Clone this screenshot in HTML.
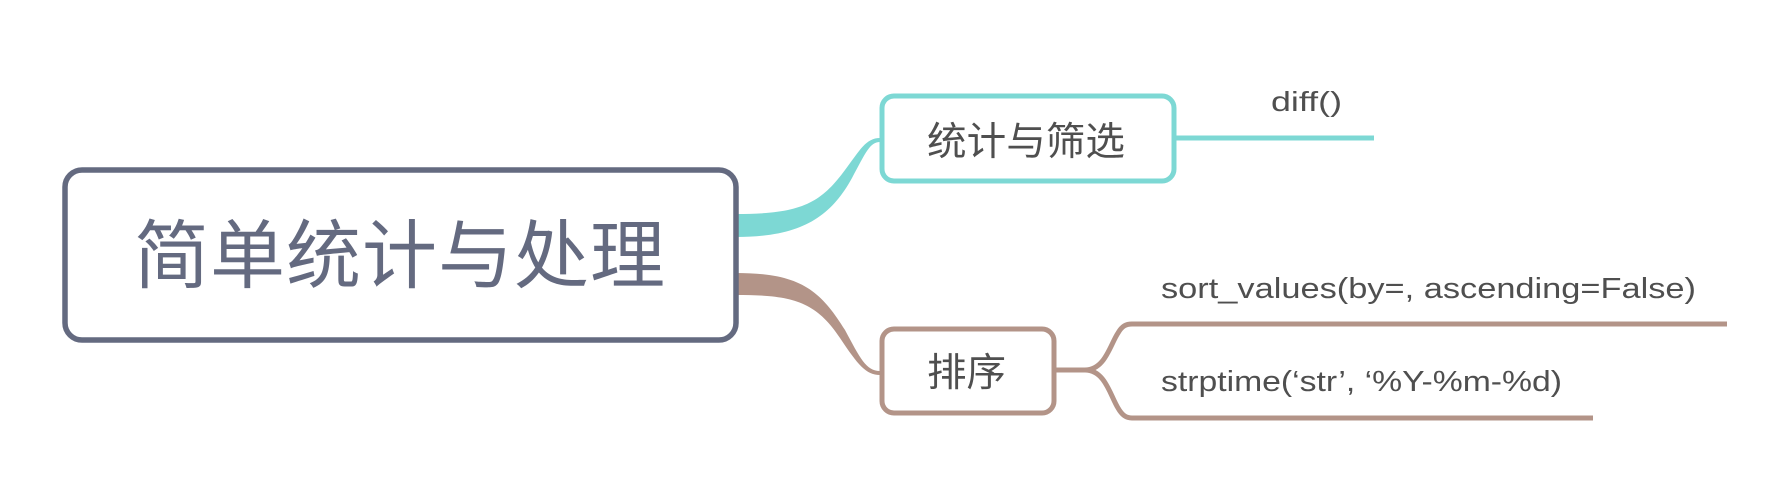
<!DOCTYPE html>
<html><head><meta charset="utf-8"><style>
html,body{margin:0;padding:0;background:#fff;}
svg{display:block;}
text{font-family:"Liberation Sans","Noto Sans CJK SC",sans-serif;fill:#4f4f4f;}
</style></head><body>
<svg width="1787" height="481" viewBox="0 0 1787 481" xmlns="http://www.w3.org/2000/svg">
<path d="M736,214 C800,214 820,204 845,170 C860,150 866,138 880,138 L880,142 C870,142 866,152 852,178 C830,218 800,237 736,237 Z" fill="#7dd8d4"/>
<path d="M736,273 C800,273 820,290 845,330 C860,358 866,371 880,371 L880,375 C866,375 858,365 840,338 C815,300 790,295 736,295 Z" fill="#b39488"/>
<rect x="65" y="170" width="671" height="170" rx="17" fill="#fff" stroke="#646a80" stroke-width="5.5"/>
<text x="400" y="282" font-size="75" text-anchor="middle" style="fill:#646a80" letter-spacing="1">简单统计与处理</text>
<rect x="882" y="96" width="292" height="85" rx="12" fill="#fff" stroke="#7dd8d4" stroke-width="5"/>
<text x="927" y="155" font-size="39" textLength="198" lengthAdjust="spacingAndGlyphs">统计与筛选</text>
<line x1="1176" y1="138" x2="1374" y2="138" stroke="#7dd8d4" stroke-width="5"/>
<text x="1271" y="111" font-size="28" textLength="71" lengthAdjust="spacingAndGlyphs">diff()</text>
<rect x="882" y="329" width="172" height="84" rx="12" fill="#fff" stroke="#b39488" stroke-width="5"/>
<text x="927" y="386" font-size="39" textLength="79" lengthAdjust="spacingAndGlyphs">排序</text>
<path d="M1056,370 L1085,370 C1105,370 1110,345 1118,333 C1122,326 1126,324 1132,324 L1727,324" fill="none" stroke="#b39488" stroke-width="5"/>
<path d="M1085,370 C1105,370 1110,395 1118,408 C1122,415 1126,418 1132,418 L1593,418" fill="none" stroke="#b39488" stroke-width="5"/>
<text x="1161" y="298" font-size="29" textLength="535" lengthAdjust="spacingAndGlyphs">sort_values(by=, ascending=False)</text>
<text x="1161" y="391" font-size="29" textLength="401" lengthAdjust="spacingAndGlyphs">strptime(‘str’, ‘%Y-%m-%d)</text>
</svg>
</body></html>
